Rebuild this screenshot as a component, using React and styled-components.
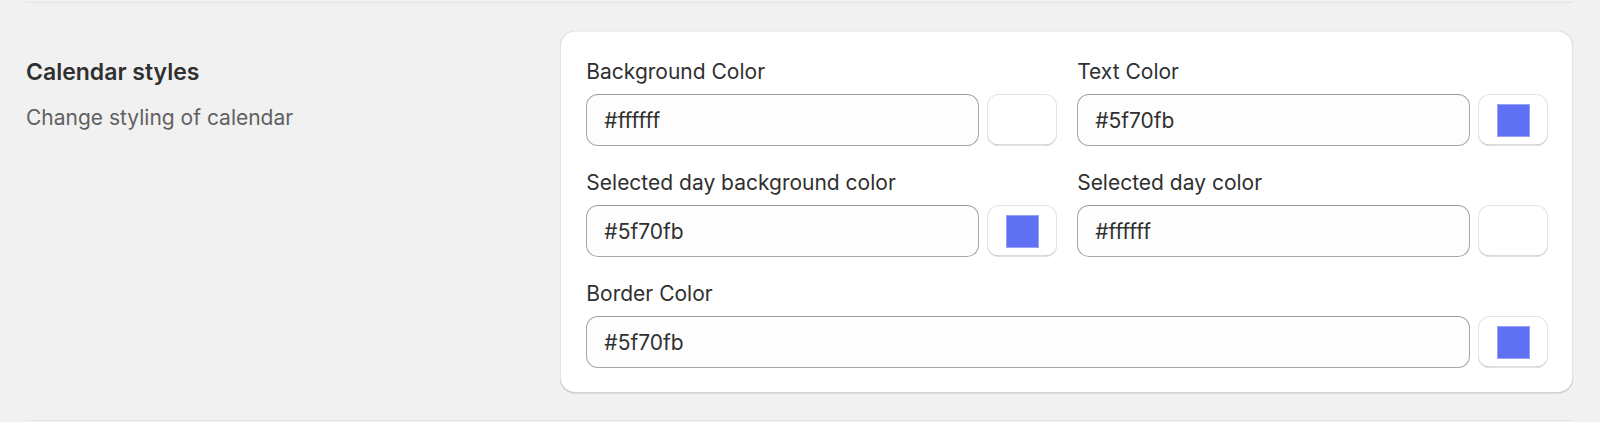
import React from "react";
import styled, { createGlobalStyle } from "styled-components";

const GlobalStyle = createGlobalStyle`
  html, body {
    margin: 0;
    padding: 0;
    background: #f1f1f1;
  }
  body {
    font-family: Inter, "Noto Sans", sans-serif;
    color: #303030;
    -webkit-font-smoothing: antialiased;
  }
`;

const Page = styled.div`
  box-sizing: border-box;
  width: 1600px;
  height: 422px;
  padding: 2px 27px 0 26px;
  background: #f1f1f1;
  display: flex;
  flex-direction: column;
`;

const Divider = styled.div`
  flex: 0 0 1px;
  height: 1px;
  background: ${(p) => (p.$light ? "#e6e6e6" : "#e3e3e3")};
`;

const Section = styled.section`
  display: grid;
  grid-template-columns: 1fr 2fr;
  column-gap: 28px;
  padding: 28px 0 27px;
`;

const Annotation = styled.div`
  display: flex;
  flex-direction: column;
  padding-top: 26px;
  gap: 17px;
`;

const Title = styled.h2`
  margin: 0;
  font-size: 23px;
  line-height: 30px;
  font-weight: 600;
  color: #303030;
`;

const Description = styled.p`
  margin: 0;
  font-size: 21px;
  line-height: 28px;
  font-weight: 400;
  color: #616161;
`;

const Card = styled.div`
  box-sizing: border-box;
  background: #ffffff;
  border-radius: 15px;
  padding: 27px 25px 25px 26px;
  box-shadow: 0 1px 1px rgba(26, 26, 26, 0.1),
    inset 0 -1px 0 rgba(0, 0, 0, 0.17),
    inset 1px 0 0 rgba(0, 0, 0, 0.11),
    inset -1px 0 0 rgba(0, 0, 0, 0.11),
    inset 0 1px 0 rgba(0, 0, 0, 0.07);
`;

const Grid = styled.div`
  display: grid;
  grid-template-columns: 1fr 1fr;
  column-gap: 20px;
  row-gap: 23px;
`;

const Field = styled.div`
  display: flex;
  flex-direction: column;
  gap: 8px;
  grid-column: ${(p) => (p.$wide ? "1 / -1" : "auto")};
`;

const Label = styled.label`
  font-size: 21px;
  line-height: 28px;
  color: #303030;
`;

const InputRow = styled.div`
  display: flex;
  gap: 8px;
`;

const TextInput = styled.input`
  box-sizing: border-box;
  flex: 1;
  min-width: 0;
  height: 52px;
  padding: 0 17px;
  border: 1px solid #a6a6a6;
  border-top-color: #999999;
  border-radius: 12px;
  background: #fdfdfd;
  font-family: Inter, "Noto Sans", sans-serif;
  font-size: 21px;
  color: #303030;
  outline: none;
`;

const SwatchButton = styled.button`
  box-sizing: border-box;
  width: 70px;
  height: 52px;
  flex: 0 0 70px;
  border: none;
  border-radius: 12px;
  background: #ffffff;
  display: flex;
  align-items: center;
  justify-content: center;
  padding: 0;
  box-shadow: inset 0 0 0 1px #e3e3e3, inset 0 -1.5px 0 #b9b9b9;
`;

const Swatch = styled.span`
  display: block;
  width: 33px;
  height: 33px;
  background: ${(p) => p.$color};
  box-shadow: ${(p) =>
    p.$color.toLowerCase() === "#ffffff" ? "none" : "inset 0 0 0 1px rgba(255,255,255,0.35)"};
`;

const fields = [
  { label: "Background Color", value: "#ffffff" },
  { label: "Text Color", value: "#5f70fb" },
  { label: "Selected day background color", value: "#5f70fb" },
  { label: "Selected day color", value: "#ffffff" },
  { label: "Border Color", value: "#5f70fb", wide: true },
];

const display = (v) => (v === "#5f70fb" ? "#6070f2" : v);

export default function App() {
  return (
    <>
      <GlobalStyle />
      <Page>
        <Divider />
        <Section>
          <Annotation>
            <Title>Calendar styles</Title>
            <Description>Change styling of calendar</Description>
          </Annotation>
          <Card>
            <Grid>
              {fields.map((f) => (
                <Field key={f.label} $wide={f.wide}>
                  <Label>{f.label}</Label>
                  <InputRow>
                    <TextInput defaultValue={f.value} />
                    <SwatchButton type="button" aria-label={`${f.label} swatch`}>
                      <Swatch $color={display(f.value)} />
                    </SwatchButton>
                  </InputRow>
                </Field>
              ))}
            </Grid>
          </Card>
        </Section>
        <Divider $light />
      </Page>
    </>
  );
}
